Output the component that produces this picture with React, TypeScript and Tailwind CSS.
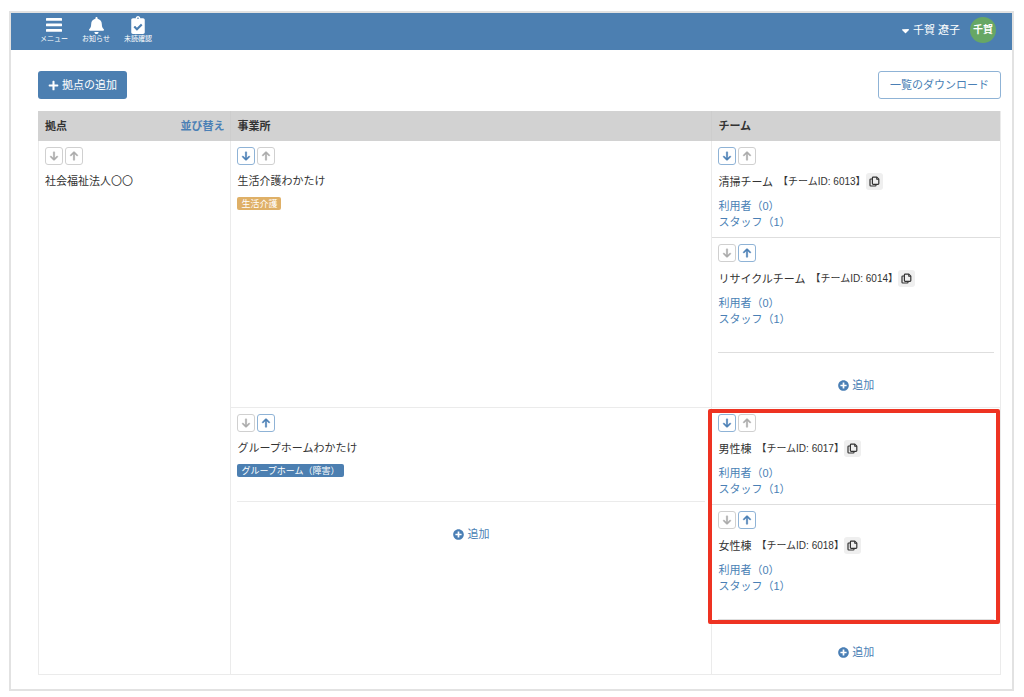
import type { ReactNode } from "react";
import { FaArrowDown, FaArrowUp, FaCaretDown } from "react-icons/fa6";
import { FaBell, FaClipboardCheck, FaPlus, FaPlusCircle } from "react-icons/fa";

type Team = { name: string; id: number; users: number; staff: number };

const DAY_TEAMS: Team[] = [
  { name: "清掃チーム", id: 6013, users: 0, staff: 1 },
  { name: "リサイクルチーム", id: 6014, users: 0, staff: 1 },
];

const HOME_TEAMS: Team[] = [
  { name: "男性棟", id: 6017, users: 0, staff: 1 },
  { name: "女性棟", id: 6018, users: 0, staff: 1 },
];

function MenuIcon() {
  return (
    <svg viewBox="0 0 16 14" className="h-[14px] w-4" fill="currentColor" aria-hidden="true">
      <rect x="0" y="0" width="16" height="2.8" rx="0.6" />
      <rect x="0" y="5.5" width="16" height="2.8" rx="0.6" />
      <rect x="0" y="11" width="16" height="2.8" rx="0.6" />
    </svg>
  );
}

function CopyIcon() {
  return (
    <svg
      viewBox="0 0 11 11"
      className="size-[11px]"
      fill="none"
      stroke="currentColor"
      strokeWidth="1.2"
      strokeLinejoin="round"
      aria-hidden="true"
    >
      <path d="M4.2 1.2h3.6l2 2v4.4a.8.8 0 0 1-.8.8H4.2a.8.8 0 0 1-.8-.8V2a.8.8 0 0 1 .8-.8Z" />
      <path d="M7.6 1.2v2.2h2.2" strokeWidth="0.9" />
      <path d="M3.2 3H1.8a.8.8 0 0 0-.8.8v5.4a.8.8 0 0 0 .8.8h4.4a.8.8 0 0 0 .8-.8v-.6" />
    </svg>
  );
}

function NavItem({ icon, label }: { icon: ReactNode; label: string }) {
  return (
    <a href="#" className="flex w-[42px] flex-col items-center">
      <span className="flex h-[18px] items-center">{icon}</span>
      <span className="text-[7px] leading-[10px] whitespace-nowrap">{label}</span>
    </a>
  );
}

function OrderButton({ direction, active }: { direction: "down" | "up"; active: boolean }) {
  const Icon = direction === "down" ? FaArrowDown : FaArrowUp;
  return (
    <button
      type="button"
      disabled={!active}
      aria-label={direction === "down" ? "下へ" : "上へ"}
      className={
        active
          ? "flex size-[18px] items-center justify-center rounded-[3px] border border-[#8fb3d6] bg-white text-[#4a7fb5]"
          : "flex size-[18px] items-center justify-center rounded-[3px] border border-[#d0d0d0] bg-white text-[#aaaaaa]"
      }
    >
      <Icon className="size-[10px] stroke-current stroke-[28px]" />
    </button>
  );
}

function OrderButtons({ down, up }: { down: boolean; up: boolean }) {
  return (
    <div className="flex gap-0.5">
      <OrderButton direction="down" active={down} />
      <OrderButton direction="up" active={up} />
    </div>
  );
}

function AddLink() {
  return (
    <a href="#" className="flex h-4 items-center justify-center gap-[3px] text-[#4a7fb5]">
      <FaPlusCircle className="size-[11px]" />
      追加
    </a>
  );
}

function TeamBlock({ team, down, up }: { team: Team; down: boolean; up: boolean }) {
  return (
    <div className="px-1.5 pt-1.5 pb-[7px]">
      <OrderButtons down={down} up={up} />
      <div className="mt-2 flex h-[17px] items-center">
        <span>{team.name}</span>
        <span className="ml-[5px] text-[10px]">【チームID: {team.id}】</span>
        <button
          type="button"
          aria-label="チームIDをコピー"
          className="flex size-[17px] items-center justify-center rounded-[3px] bg-[#efefef] text-[#333333]"
        >
          <CopyIcon />
        </button>
      </div>
      <div className="mt-2 flex flex-col items-start leading-4 text-[#4a7fb5]">
        <a href="#">利用者（{team.users}）</a>
        <a href="#">スタッフ（{team.staff}）</a>
      </div>
    </div>
  );
}

function TeamCell({ teams, highlighted }: { teams: Team[]; highlighted?: boolean }) {
  return (
    <td className="border-b border-l border-[#ebebeb] p-0 align-top">
      <div className="relative">
        <div className="divide-y divide-[#dedede]">
          {teams.map((team, index) => (
            <TeamBlock key={team.id} team={team} down={index < teams.length - 1} up={index > 0} />
          ))}
        </div>
        <hr className="mx-1.5 mt-[18px] border-[#dedede]" />
        {highlighted && (
          <div className="pointer-events-none absolute top-px right-0 -bottom-1 -left-1 rounded-[2px] border-4 border-[#ee3322]" />
        )}
      </div>
      <div className="pt-6 pb-[14px]">
        <AddLink />
      </div>
    </td>
  );
}

export default function App() {
  return (
    <div className="bg-white pt-[11px] pr-[10px] pb-1.5 pl-[9px] font-['Liberation_Sans','Noto_Sans_CJK_JP',sans-serif] text-[11px] leading-4 text-[#333333]">
      <div className="border-2 border-[#e2e2e2]">
        <header className="flex h-[37px] items-center justify-between bg-[#4c7fb1] pr-4 pb-[3px] pl-[22px] text-white">
          <nav className="flex">
            <NavItem icon={<MenuIcon />} label="メニュー" />
            <NavItem icon={<FaBell className="size-[17px]" />} label="お知らせ" />
            <NavItem icon={<FaClipboardCheck className="size-[18px]" />} label="未読確認" />
          </nav>
          <button type="button" className="flex items-center">
            <FaCaretDown className="mr-0.5 size-[11px]" />
            <span>千賀 遼子</span>
            <span className="ml-[10px] flex size-[26px] items-center justify-center rounded-full bg-[#67a765] text-[10px] font-bold">
              千賀
            </span>
          </button>
        </header>

        <main className="pt-[21px] pr-[11px] pb-3.5 pl-[27px]">
          <div className="flex justify-between">
            <button
              type="button"
              className="flex h-7 items-center gap-[3px] rounded-[3px] bg-[#4c7fb1] px-2.5 text-white"
            >
              <FaPlus className="size-[11px]" />
              拠点の追加
            </button>
            <button
              type="button"
              className="flex h-7 items-center rounded-[3px] border border-[#8fb3d6] bg-white px-[11px] text-[#4a7fb5]"
            >
              一覧のダウンロード
            </button>
          </div>

          <table className="mt-3 w-full table-fixed border-separate border-spacing-0 border-r border-[#ebebeb]">
            <colgroup>
              <col className="w-[20%]" />
              <col className="w-[50%]" />
              <col className="w-[30%]" />
            </colgroup>
            <thead>
              <tr className="h-[30px] bg-[#d2d2d2] text-left">
                <th scope="col" className="border-l border-[#d2d2d2] px-1.5 py-0">
                  <div className="flex justify-between">
                    <span>拠点</span>
                    <a href="#" className="text-[#4a7fb5]">
                      並び替え
                    </a>
                  </div>
                </th>
                <th scope="col" className="border-l border-[#cdcdcd] px-1.5 py-0">
                  事業所
                </th>
                <th scope="col" className="border-l border-[#cdcdcd] px-1.5 py-0">
                  チーム
                </th>
              </tr>
            </thead>
            <tbody>
              <tr>
                <td rowSpan={2} className="border-b border-l border-[#ebebeb] px-1.5 pt-1.5 align-top">
                  <OrderButtons down={false} up={false} />
                  <p className="mt-2">社会福祉法人〇〇</p>
                </td>
                <td className="border-b border-l border-[#ebebeb] px-1.5 pt-1.5 align-top">
                  <OrderButtons down={true} up={false} />
                  <p className="mt-2">生活介護わかたけ</p>
                  <span className="mt-2 flex h-[13px] w-fit items-center rounded-[2px] bg-[#dfb067] px-1 text-[9px] text-white">
                    生活介護
                  </span>
                </td>
                <TeamCell teams={DAY_TEAMS} />
              </tr>
              <tr>
                <td className="border-b border-l border-[#ebebeb] px-1.5 pt-1.5 align-top">
                  <OrderButtons down={false} up={true} />
                  <p className="mt-2">グループホームわかたけ</p>
                  <span className="mt-2 flex h-[13px] w-fit items-center rounded-[2px] bg-[#4c7fb1] px-1 text-[9px] text-white">
                    グループホーム（障害）
                  </span>
                  <hr className="mt-6 mb-6 border-[#ebebeb]" />
                  <AddLink />
                </td>
                <TeamCell teams={HOME_TEAMS} highlighted />
              </tr>
            </tbody>
          </table>
        </main>
      </div>
    </div>
  );
}
